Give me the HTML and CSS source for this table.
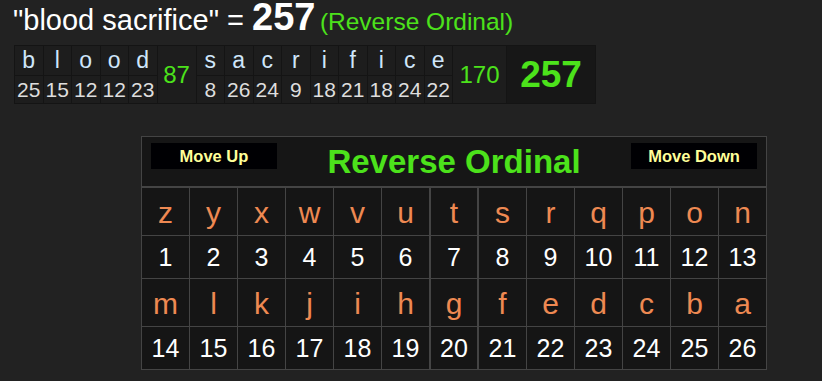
FILE: index.html
```html
<!DOCTYPE html>
<html>
<head>
<meta charset="utf-8">
<link rel="stylesheet" href="styles.css">
</head>
<body>
<div class="page">
  <div class="title"><span class="phrase">"blood sacrifice" = </span><span class="total">257</span> <span class="cipher">(Reverse Ordinal)</span></div>

  <div class="breakdown">
    <div class="word">
      <div class="col"><span class="l">b</span><span class="n">25</span></div>
      <div class="col"><span class="l">l</span><span class="n">15</span></div>
      <div class="col"><span class="l">o</span><span class="n">12</span></div>
      <div class="col"><span class="l">o</span><span class="n">12</span></div>
      <div class="col"><span class="l">d</span><span class="n">23</span></div>
    </div>
    <div class="wsum w87">87</div>
    <div class="word">
      <div class="col"><span class="l">s</span><span class="n">8</span></div>
      <div class="col"><span class="l">a</span><span class="n">26</span></div>
      <div class="col"><span class="l">c</span><span class="n">24</span></div>
      <div class="col"><span class="l">r</span><span class="n">9</span></div>
      <div class="col"><span class="l">i</span><span class="n">18</span></div>
      <div class="col"><span class="l">f</span><span class="n">21</span></div>
      <div class="col"><span class="l">i</span><span class="n">18</span></div>
      <div class="col"><span class="l">c</span><span class="n">24</span></div>
      <div class="col"><span class="l">e</span><span class="n">22</span></div>
    </div>
    <div class="wsum w170">170</div>
    <div class="gsum">257</div>
  </div>

  <div class="chart">
    <div class="chart-head">
      <button class="move">Move Up</button>
      <h2 class="chart-title">Reverse Ordinal</h2>
      <button class="move">Move Down</button>
    </div>
    <div class="grid">
      <div class="c let">z</div><div class="c let">y</div><div class="c let">x</div><div class="c let">w</div><div class="c let">v</div><div class="c let">u</div><div class="c let mid">t</div><div class="c let">s</div><div class="c let">r</div><div class="c let">q</div><div class="c let">p</div><div class="c let">o</div><div class="c let">n</div>
      <div class="c num">1</div><div class="c num">2</div><div class="c num">3</div><div class="c num">4</div><div class="c num">5</div><div class="c num">6</div><div class="c num mid">7</div><div class="c num">8</div><div class="c num">9</div><div class="c num">10</div><div class="c num">11</div><div class="c num">12</div><div class="c num">13</div>
      <div class="c let">m</div><div class="c let">l</div><div class="c let">k</div><div class="c let">j</div><div class="c let">i</div><div class="c let">h</div><div class="c let mid">g</div><div class="c let">f</div><div class="c let">e</div><div class="c let">d</div><div class="c let">c</div><div class="c let">b</div><div class="c let">a</div>
      <div class="c num">14</div><div class="c num">15</div><div class="c num">16</div><div class="c num">17</div><div class="c num">18</div><div class="c num">19</div><div class="c num mid">20</div><div class="c num">21</div><div class="c num">22</div><div class="c num">23</div><div class="c num">24</div><div class="c num">25</div><div class="c num">26</div>
    </div>
  </div>
</div>
</body>
</html>
```

FILE: styles.css
```css
html, body {
  margin: 0;
  padding: 0;
  background: #222222;
  font-family: "Liberation Sans", Arial, sans-serif;
}

.page {
  padding: 0 0 0 14px;
}

.title {
  height: 39px;
  padding-top: 1px;
  box-sizing: border-box;
  line-height: 32px;
  white-space: nowrap;
  color: #ffffff;
  margin-left: -1px;
}

.phrase {
  font-size: 29px;
}

.total {
  font-size: 38px;
  font-weight: bold;
}

.cipher {
  font-size: 24.5px;
  color: #4ce21b;
}

.breakdown {
  display: inline-flex;
  margin-top: 6px;
  background: #141414;
  padding: 1px;
  gap: 1px;
  vertical-align: top;
}

.word {
  display: flex;
  gap: 1px;
}

.col {
  display: flex;
  flex-direction: column;
  gap: 1px;
  width: 27.5px;
  text-align: center;
}

.col .l {
  height: 29px;
  line-height: 29px;
  font-size: 23px;
  color: #cfe6fa;
  background: #1d1d1d;
}

.col .n {
  height: 27px;
  line-height: 27px;
  font-size: 21px;
  color: #dedede;
  background: #1d1d1d;
}

.wsum {
  display: flex;
  align-items: center;
  justify-content: center;
  background: #1d1d1d;
  color: #4ce21b;
  font-size: 24px;
}

.w87 { width: 38px; }
.w170 { width: 53px; }

.gsum {
  width: 88px;
  display: flex;
  align-items: center;
  justify-content: center;
  background: #171717;
  color: #4ce21b;
  font-size: 37px;
  font-weight: bold;
}

.chart {
  margin: 32px 0 0 127px;
  width: 624px;
  border: 1px solid #444444;
  background: #151515;
}

.chart-head {
  height: 51px;
  box-sizing: border-box;
  padding: 6px 9px 0 9px;
  display: flex;
  justify-content: space-between;
  align-items: flex-start;
  border-bottom: 2px solid #444444;
  background: #161616;
}

.move {
  width: 126px;
  height: 26px;
  margin: 0;
  padding: 0;
  border: none;
  background: #000003;
  color: #ffff99;
  font-family: "Liberation Sans", Arial, sans-serif;
  font-weight: bold;
  font-size: 16.5px;
}

.chart-title {
  margin: -6px 0 0 0;
  font-size: 33px;
  line-height: 49px;
  font-weight: bold;
  color: #4ce21b;
}

.grid {
  display: grid;
  grid-template-columns: repeat(6, 47px) 48px repeat(6, 47px);
  grid-template-rows: 47px 42px 47px 42px;
  gap: 1px;
  background: #444444;
}

.c {
  background: #151515;
  display: flex;
  align-items: center;
  justify-content: center;
}

.c.mid {
  border-left: 1px solid #444444;
  border-right: 1px solid #444444;
}

.let {
  font-size: 30px;
  color: #ee8952;
  padding-top: 2px;
  box-sizing: border-box;
}

.num {
  font-size: 25px;
  color: #ffffff;
}
```
